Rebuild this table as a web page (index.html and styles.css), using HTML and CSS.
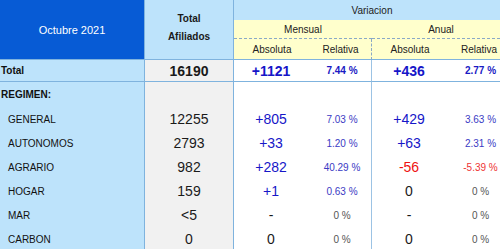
FILE: index.html
```html
<!DOCTYPE html>
<html lang="es">
<head>
<meta charset="utf-8">
<title>Afiliados Octubre 2021</title>
<link rel="stylesheet" href="styles.css">
</head>
<body>
<div class="grid">
  <div class="h-month">Octubre 2021</div>
  <div class="h-total">Total<br>Afiliados</div>
  <div class="h-var">Variacion</div>
  <div class="h-per">Mensual</div>
  <div class="h-per">Anual</div>
  <div class="h-sub">Absoluta</div>
  <div class="h-sub sep">Relativa</div>
  <div class="h-sub">Absoluta</div>
  <div class="h-sub">Relativa</div>

  <div class="lab b tr">Total</div>
  <div class="num b tr">16190</div>
  <div class="abs b pos tr">+1121</div>
  <div class="rel b pos tr msep">7.44 %</div>
  <div class="abs b pos tr">+436</div>
  <div class="rel b pos tr">2.77 %</div>

  <div class="lab b grp">REGIMEN:</div>
  <div class="num"></div>
  <div class="abs"></div>
  <div class="rel msep"></div>
  <div class="abs"></div>
  <div class="rel"></div>

  <div class="lab ind">GENERAL</div>
  <div class="num">12255</div>
  <div class="abs pos">+805</div>
  <div class="rel pos msep">7.03 %</div>
  <div class="abs pos">+429</div>
  <div class="rel pos">3.63 %</div>

  <div class="lab ind">AUTONOMOS</div>
  <div class="num">2793</div>
  <div class="abs pos">+33</div>
  <div class="rel pos msep">1.20 %</div>
  <div class="abs pos">+63</div>
  <div class="rel pos">2.31 %</div>

  <div class="lab ind">AGRARIO</div>
  <div class="num">982</div>
  <div class="abs pos">+282</div>
  <div class="rel pos msep">40.29 %</div>
  <div class="abs neg">-56</div>
  <div class="rel neg">-5.39 %</div>

  <div class="lab ind">HOGAR</div>
  <div class="num">159</div>
  <div class="abs pos">+1</div>
  <div class="rel pos msep">0.63 %</div>
  <div class="abs">0</div>
  <div class="rel zero">0 %</div>

  <div class="lab ind">MAR</div>
  <div class="num">&lt;5</div>
  <div class="abs">-</div>
  <div class="rel zero msep">0 %</div>
  <div class="abs">-</div>
  <div class="rel zero">0 %</div>

  <div class="lab ind">CARBON</div>
  <div class="num">0</div>
  <div class="abs">0</div>
  <div class="rel zero msep">0 %</div>
  <div class="abs">0</div>
  <div class="rel zero">0 %</div>
</div>
</body>
</html>
```
FILE: styles.css
```css
html, body {
  margin: 0;
  padding: 0;
  background: #ffffff;
  overflow: hidden;
}
body {
  font-family: "Liberation Sans", Arial, sans-serif;
  color: #1a1a1a;
}
.grid {
  display: grid;
  width: 510px;
  grid-template-columns: 145px 89px 76px 62px 76px 62px;
  grid-template-rows: 20px 19px 21px 22px 25px repeat(6, 24px);
}
.grid > div {
  box-sizing: border-box;
  display: flex;
  align-items: center;
  justify-content: center;
  white-space: nowrap;
}
.h-month {
  grid-row: 1 / 4;
  grid-column: 1;
  background: #075bd5;
  color: #ffffff;
  font-size: 11px;
  border-right: 1px solid #7fb3de;
  border-bottom: 1px solid #7fb3de;
}
.h-total {
  grid-row: 1 / 4;
  grid-column: 2;
  background: #bde3fb;
  font-size: 10px;
  font-weight: bold;
  line-height: 18px;
  text-align: center;
  padding-bottom: 3px;
  border-right: 1px solid #7fb3de;
  border-bottom: 1px solid #7fb3de;
}
.h-var {
  grid-row: 1;
  grid-column: 3 / 7;
  background: #bde3fb;
  font-size: 10px;
  color: #222;
}
.h-per {
  grid-column: span 2;
  background: #ffffcc;
  font-size: 10px;
  color: #222;
  border-bottom: 1px dashed #8aa9c6;
}
.h-sub {
  background: #ffffcc;
  font-size: 10px;
  color: #222;
  border-bottom: 1px solid #7fb3de;
}
.h-sub.sep {
  border-right: 1px dashed #8aa9c6;
}
.lab {
  background: #bde3fb;
  border-right: 1px solid #7fb3de;
  justify-content: flex-start !important;
  font-size: 10px;
  color: #111;
}
.lab.b {
  padding-left: 1px;
}
.lab.ind {
  padding-left: 8px;
}
.num {
  background: #f1f1f1;
  border-right: 1px solid #7fb3de;
  font-size: 14px;
}
.abs {
  font-size: 14px;
  padding-right: 2px;
}
.rel {
  font-size: 10px;
  padding-left: 3px;
}
.msep {
  border-right: 1px solid #9cc3e4;
}
.b {
  font-weight: bold;
}
.tr {
  border-bottom: 1px solid #7fb3de;
}
.pos {
  color: #1616c8;
}
.rel.pos {
  color: #3a3ac4;
}
.rel.pos.b {
  color: #1a1ac4;
}
.neg {
  color: #ee1111;
}
.rel.neg {
  color: #ee3333;
}
.zero {
  color: #555555;
}
```
